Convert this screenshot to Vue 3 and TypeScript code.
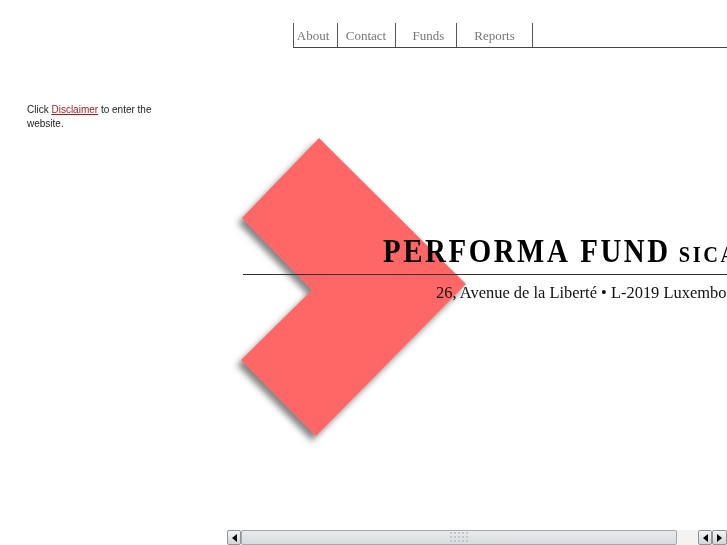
<script setup lang="ts">
const navItems = [
  { label: 'About', width: 44 },
  { label: 'Contact', width: 58 },
  { label: 'Funds', width: 61 },
  { label: 'Reports', width: 76 },
]

// grip on the scrollbar thumb: 5 x 3 dots
const gripDots: { x: number; y: number }[] = []
for (let row = 0; row < 3; row++) {
  for (let col = 0; col < 5; col++) {
    gripDots.push({ x: col * 4, y: row * 4 })
  }
}
</script>

<template>
  <div class="page">
    <aside class="side">
      <p class="intro">Click <a href="#" class="intro-link">Disclaimer</a> to enter the website.</p>
    </aside>

    <main class="frame">
      <nav class="nav">
        <a v-for="item in navItems" :key="item.label" href="#" class="nav-item" :style="{ width: item.width + 'px' }">{{ item.label }}</a>
      </nav>

      <section class="stage">
        <svg class="logo" width="260" height="330" viewBox="0 0 260 330">
          <defs>
            <filter id="logo-shadow" x="-10%" y="-10%" width="120%" height="120%">
              <feDropShadow dx="-4" dy="5" stdDeviation="3" flood-color="#555" flood-opacity="0.72" />
            </filter>
          </defs>
          <polygon points="92,8 15,88 85,160 14,230 89,306 239,154" fill="#ff6666" filter="url(#logo-shadow)" />
        </svg>
        <div class="brand">
          <h1 class="brand-name"><span class="brand-text">PERFORMA FUND <small class="brand-type">SICAV</small></span></h1>
          <p class="brand-address"><span class="address-text">26, Avenue de la Liberté • L-2019 Luxembourg</span></p>
        </div>
      </section>

      <div class="scrollbar">
        <span class="sb-btn"><i class="arrow arrow-left"></i></span>
        <span class="sb-thumb">
          <svg width="19" height="12" viewBox="0 0 19 12">
            <rect v-for="(d, i) in gripDots" :key="i" :x="d.x" :y="d.y" width="2" height="2" fill="#c2c6ca" />
          </svg>
        </span>
        <span class="sb-track"></span>
        <span class="sb-btn"><i class="arrow arrow-left"></i></span>
        <span class="sb-btn sb-btn-last"><i class="arrow arrow-right"></i></span>
      </div>
    </main>
  </div>
</template>

<style scoped>
.page {
  display: flex;
  width: 727px;
  height: 545px;
  overflow: hidden;
  background: #fff;
  filter: blur(0.35px);
}

.side {
  width: 227px;
  flex-shrink: 0;
  padding: 103px 60px 0 27px;
  box-sizing: border-box;
}

.intro {
  margin: 0;
  font-family: "Liberation Sans", Arial, sans-serif;
  font-size: 10px;
  line-height: 14px;
  color: #222;
}

.intro-link {
  color: #a51c1c;
}

.frame {
  flex: 1;
  min-width: 0;
  display: flex;
  flex-direction: column;
}

.nav {
  display: flex;
  margin: 23px 0 0 66px;
  height: 24px;
  border-bottom: 1px solid #444;
  border-left: 1px solid #555;
}

.nav-item {
  box-sizing: border-box;
  border-right: 1px solid #555;
  font-family: "Liberation Serif", "Times New Roman", serif;
  font-size: 13px;
  line-height: 25px;
  color: #777;
  text-align: center;
  text-decoration: none;
}

.nav-item:nth-child(1) {
  padding-right: 5px;
}

.nav-item:nth-child(2) {
  padding-right: 1px;
}

.nav-item:nth-child(3) {
  padding-left: 5px;
}

.stage {
  position: relative;
  flex: 1;
  min-height: 0;
  overflow: hidden;
}

.logo {
  position: absolute;
  left: 0;
  top: 82px;
}

.brand {
  position: absolute;
  left: 16px;
  right: 0;
  top: 183px;
  overflow: hidden;
}

.brand-name {
  margin: 0;
  height: 43px;
  padding-left: 140px;
  border-bottom: 1px solid #333;
  font-family: "Liberation Serif", "Times New Roman", serif;
  font-size: 34px;
  line-height: 40px;
  font-weight: 700;
  letter-spacing: 3px;
  word-spacing: 2px;
  color: #000;
  white-space: nowrap;
}

.brand-text {
  display: inline-block;
  transform: scaleX(0.85);
  transform-origin: left center;
}

.brand-type {
  margin-left: -4px;
  font-size: 24px;
}

.brand-address {
  margin: 0;
  padding-left: 193px;
  font-family: "Liberation Serif", "Times New Roman", serif;
  font-size: 17.5px;
  line-height: 35px;
  color: #111;
  white-space: nowrap;
}

.address-text {
  display: inline-block;
  transform: scaleX(0.94);
  transform-origin: left center;
}

.scrollbar {
  display: flex;
  height: 15px;
  flex-shrink: 0;
  background: #f3f3f3;
}

.sb-btn {
  box-sizing: border-box;
  width: 14px;
  display: flex;
  align-items: center;
  justify-content: center;
  border: 1px solid #8f9498;
  border-radius: 2px;
  background: linear-gradient(#f4f4f4, #d3d6d8);
}

.sb-btn-last {
  width: 15px;
}

.sb-thumb {
  flex: 0 0 436px;
  box-sizing: border-box;
  display: flex;
  align-items: center;
  justify-content: center;
  border: 1px solid #a4a8ac;
  border-radius: 2px;
  background: linear-gradient(#e8eaec, #d9dcde);
}

.sb-track {
  flex: 1;
}

.arrow {
  display: block;
  width: 0;
  height: 0;
  border-top: 4px solid transparent;
  border-bottom: 4px solid transparent;
}

.arrow-left {
  border-right: 5px solid #000;
}

.arrow-right {
  border-left: 5px solid #000;
}
</style>
